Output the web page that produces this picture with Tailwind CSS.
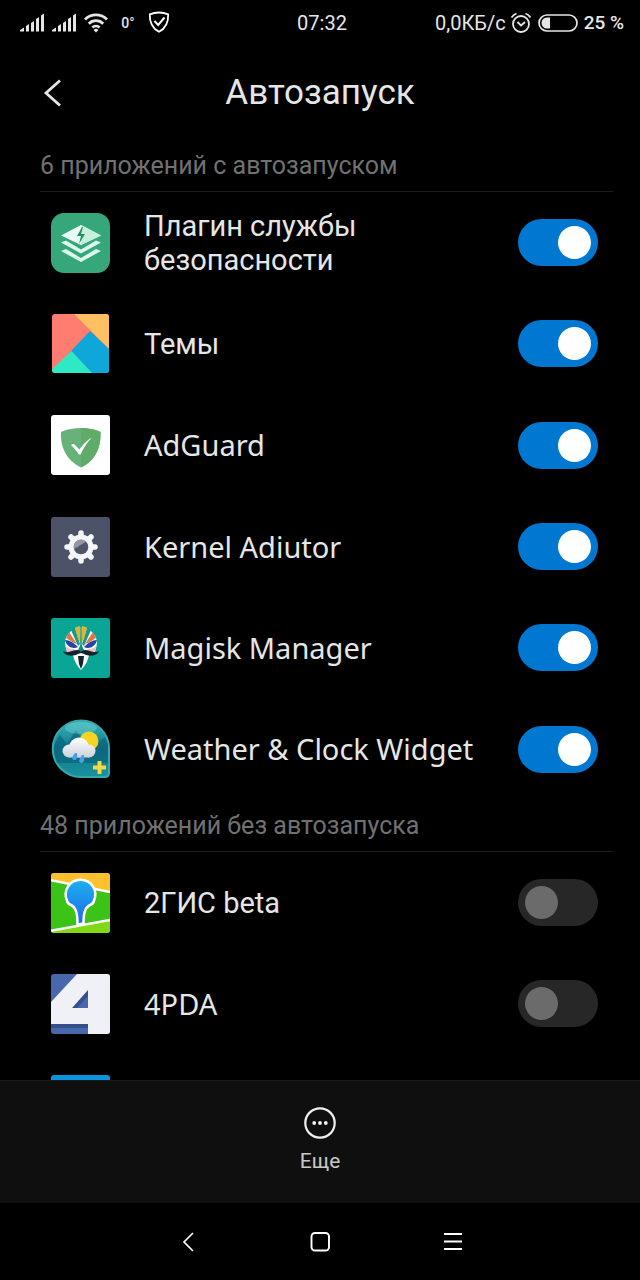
<!DOCTYPE html>
<html lang="ru">
<head>
    <meta charset="UTF-8">
    <meta name="viewport" content="width=device-width, initial-scale=1.0">
    <title>Автозапуск</title>
    <script src="https://cdn.jsdelivr.net/npm/@tailwindcss/browser@4"></script>
</head>
<body class="bg-black text-[#e6e6e6] font-['Roboto',sans-serif]">
<div class="flex flex-col h-screen">

    <!-- Status bar -->
    <div class="grid grid-cols-3 items-center h-[46px] pl-5 pr-4 text-xl shrink-0">
        <div class="flex items-center gap-2">
            <svg class="w-6 h-5" viewBox="0 0 24 20" fill="#e6e6e6"><path d="M0 17 4 14.500v4H0zM6 13l3-2v7.500H6zM11 10l3-2v10.500h-3zM16 6l3-2v14.500h-3zM21 2.500 24 .5v18h-3z"/></svg>
            <svg class="w-6 h-5" viewBox="0 0 24 20" fill="#e6e6e6"><path d="M0 17 4 14.500v4H0zM6 13l3-2v7.500H6zM11 10l3-2v10.500h-3zM16 6l3-2v14.500h-3zM21 2.500 24 .5v18h-3z"/></svg>
            <svg class="w-6 h-5" viewBox="0 0 24 20" fill="none" stroke="#e6e6e6" stroke-width="2.800"><path d="M1 6.500a15.500 15.500 0 0 1 22 0M4.800 10.700a10 10 0 0 1 14.400 0M8.400 14.500a5.200 5.200 0 0 1 7.200 0"/><path d="M12 19.500 9.500 17a3.600 3.600 0 0 1 5 0z" fill="#e6e6e6" stroke="none"/></svg>
            <span class="w-6 text-center text-sm font-medium">0°</span>
            <svg class="w-6 h-6" viewBox="0 0 24 24" fill="none" stroke="#fff" stroke-width="1.800"><path d="M11 1.500c3 0 6 .5 9.200 1.800C20.500 11 18.500 17 11 20.800 3.500 17 1.500 11 1.800 3.300 5 2 8 1.500 11 1.500z"/><path d="m6.500 10 3.700 4 6.300-7.500" stroke-width="2"/></svg>
        </div>
        <div class="text-center">07:32</div>
        <div class="flex items-center justify-end gap-1 whitespace-nowrap">
            <span>0,0КБ/с</span>
            <svg class="w-[22px] h-[22px] shrink-0" viewBox="0 0 22 22" fill="none" stroke="#e6e6e6" stroke-width="1.800"><circle cx="11" cy="12" r="8"/><path d="M1.500 5.500a10 10 0 0 1 5-4M20.500 5.500a10 10 0 0 0-5-4M7.500 10l3.500 3.500L15 10"/></svg>
            <svg class="w-11 h-5 shrink-0" viewBox="0 0 44 20" fill="none"><rect x="3" y="2" width="38" height="16" rx="8" stroke="#e6e6e6" stroke-width="1.700"/><path d="M14 4.500v11h-3a5.500 5.500 0 0 1 0-11z" fill="#e6e6e6"/></svg>
            <span class="text-[19px] font-medium">25 %</span>
        </div>
    </div>

    <!-- Header -->
    <header class="grid grid-cols-[1fr_auto_1fr] items-center h-[94px] px-10 shrink-0">
        <button type="button" aria-label="Назад" class="w-6 h-8">
            <svg class="w-6 h-8" viewBox="0 0 24 32" fill="none" stroke="#e6e6e6" stroke-width="2.800"><path d="M20 3.500 6 16l14 12.500"/></svg>
        </button>
        <h1 class="text-[35px] leading-10">Автозапуск</h1>
    </header>

    <main class="flex-1 min-h-0 overflow-hidden">
        <section>
            <h2 class="flex items-center h-[52px] ml-10 mr-[27px] border-b border-[#1c1c1c] text-[25px] text-[#717171]">6 приложений с автозапуском</h2>
            <ul class="grid grid-rows-6 h-[608px] text-[29px] leading-[34px]">
                <li class="flex items-center pl-[50px] pr-[42px]">
                    <svg class="w-[60px] h-[60px] shrink-0" viewBox="0 0 60 60">
                        <rect x="1" width="59" height="60" rx="13" fill="#36a67b"/>
                        <path d="m11 38 5-2 15 9 15-9 5 2-20 11z" fill="#dcfaec"/>
                        <path d="m11 29.500 5-2 15 9 15-9 5 2-20 11z" fill="#dcfaec"/>
                        <path d="m31 12 20 10.500-20 9.500-20-9.500z" fill="#e9fff5"/>
                        <path d="M31 12v20l20-9.500z" fill="#c4f0dc"/>
                        <path d="m32 14-5 9h4l-2 8 6-10h-4l2-7z" fill="#268c64"/>
                    </svg>
                    <label for="plugin" class="flex-1 ml-[34px]">Плагин службы<br>безопасности</label>
                    <input id="plugin" type="checkbox" checked class="appearance-none flex items-center w-20 h-[47px] px-[7px] rounded-full bg-[#272727] checked:bg-[#0078d2] checked:justify-end before:block before:w-[33px] before:h-[33px] before:rounded-full before:bg-[#6b6b6b] checked:before:bg-white">
                </li>
                <li class="flex items-center pl-[50px] pr-[42px]">
                    <svg class="w-[60px] h-[60px] shrink-0" viewBox="0 0 60 60">
                        <clipPath id="themes"><rect x="2" width="57" height="59" rx="3"/></clipPath>
                        <g clip-path="url(#themes)">
                            <path d="M0 0h60v60H0z" fill="#ff7c70"/>
                            <path d="M24 0h36v36z" fill="#ffc061"/>
                            <path d="M40 17 60 36v24H42L21 37z" fill="#0fa7d9"/>
                            <path d="M0 57v3h43L21.500 37z" fill="#2deac4"/>
                        </g>
                    </svg>
                    <label for="themesApp" class="flex-1 ml-[34px]">Темы</label>
                    <input id="themesApp" type="checkbox" checked class="appearance-none flex items-center w-20 h-[47px] px-[7px] rounded-full bg-[#272727] checked:bg-[#0078d2] checked:justify-end before:block before:w-[33px] before:h-[33px] before:rounded-full before:bg-[#6b6b6b] checked:before:bg-white">
                </li>
                <li class="flex items-center pl-[50px] pr-[42px]">
                    <svg class="w-[60px] h-[60px] shrink-0" viewBox="0 0 60 60">
                        <rect x="1" width="59" height="60" rx="3" fill="#fff"/>
                        <path d="M31 13c7 0 13 1 19.500 4C51 32 46 45 31 52.500 16 45 10 32 11 17c6.500-3 13-4 20-4z" fill="#67b279"/>
                        <path d="M31 13c7 0 13 1 19.500 4C51 32 46 45 31 52.500z" fill="#5fac6a"/>
                        <path d="M21 30c2-1.500 3-1.500 4 0l4.500 4.500C33 29 37 25 42 22.500c-5 5-8 10-11.500 17h-1.500C26.500 36 24 33 21 30z" fill="#fff"/>
                    </svg>
                    <label for="adguard" class="flex-1 ml-[34px] font-['Noto_Sans',sans-serif]">AdGuard</label>
                    <input id="adguard" type="checkbox" checked class="appearance-none flex items-center w-20 h-[47px] px-[7px] rounded-full bg-[#272727] checked:bg-[#0078d2] checked:justify-end before:block before:w-[33px] before:h-[33px] before:rounded-full before:bg-[#6b6b6b] checked:before:bg-white">
                </li>
                <li class="flex items-center pl-[50px] pr-[42px]">
                    <svg class="w-[60px] h-[60px] shrink-0" viewBox="0 0 60 60">
                        <rect x="1" width="59" height="60" rx="3" fill="#4c5267"/>
                        <g stroke="#f5f6f8" stroke-width="5.500" stroke-linecap="round">
                            <path d="M31 16v28M17 30h28M21 20l20 20M41 20 21 40"/>
                        </g>
                        <circle cx="31" cy="30" r="12.500" fill="#f5f6f8"/>
                        <circle cx="31" cy="30" r="7.300" fill="#50566a"/>
                        <path d="M24 32a7.300 7.300 0 0 1 12-7.300z" fill="#9397a4"/>
                    </svg>
                    <label for="kernel" class="flex-1 ml-[34px] font-['Noto_Sans',sans-serif]">Kernel Adiutor</label>
                    <input id="kernel" type="checkbox" checked class="appearance-none flex items-center w-20 h-[47px] px-[7px] rounded-full bg-[#272727] checked:bg-[#0078d2] checked:justify-end before:block before:w-[33px] before:h-[33px] before:rounded-full before:bg-[#6b6b6b] checked:before:bg-white">
                </li>
                <li class="flex items-center pl-[50px] pr-[42px]">
                    <svg class="w-[60px] h-[60px] shrink-0" viewBox="0 0 60 60">
                        <rect x="1" width="59" height="60" rx="3" fill="#0aa695"/>
                        <path d="M15 25c0-7 5-14 16-16 11 2 16 9 16 16-1 4-1 8-3 10l-5 2c-1 6-4 11-8 15-4-4-7-9-8-15l-5-2c-2-2-2-6-3-10z" fill="#fff"/>
                        <path d="m21 12 7 16 2-2-5-16zM41 12l-7 16-2-2 5-16z" fill="#159b8b"/>
                        <path d="M25 9.500 30 8l1 18-3-5zM37 9.500 32 8l-1 18 3-5z" fill="#dfb633"/>
                        <path d="M31 8v20" stroke="#159b8b" stroke-width="1.500"/>
                        <path d="m19 14 8 12-3-1-8-5zM43 14l-8 12 3-1 8-5z" fill="#dc7746"/>
                        <path d="M15 22c5 0 9 3 13 7-4 2-11 1-13-7zM47 22c-5 0-9 3-13 7 4 2 11 1 13-7z" fill="#2446a0"/>
                        <path d="M15 27c3 4 6 4 10 4l-3 4-5-2zM47 27c-3 4-6 4-10 4l3 4 5-2z" fill="#f2bdc5"/>
                        <path d="m31 26-4 8h8z" fill="#12877a"/>
                        <path d="M13 33c4 3 10-1 14-1 2 0 3 1 4 2 1-1 2-2 4-2 4 0 10 4 14 1-1 5-10 6-15 3l-3-1-3 1c-5 3-14 2-15-3zM28 38h6l-1 8-2 5-2-5z" fill="#10262c"/>
                    </svg>
                    <label for="magisk" class="flex-1 ml-[34px] font-['Noto_Sans',sans-serif]">Magisk Manager</label>
                    <input id="magisk" type="checkbox" checked class="appearance-none flex items-center w-20 h-[47px] px-[7px] rounded-full bg-[#272727] checked:bg-[#0078d2] checked:justify-end before:block before:w-[33px] before:h-[33px] before:rounded-full before:bg-[#6b6b6b] checked:before:bg-white">
                </li>
                <li class="flex items-center pl-[50px] pr-[42px]">
                    <svg class="w-[60px] h-[60px] shrink-0" viewBox="0 0 60 60">
                        <defs>
                            <linearGradient id="sky" x2="0" y2="1"><stop stop-color="#35b5b9"/><stop offset=".5" stop-color="#14768b"/><stop offset="1" stop-color="#17939f"/></linearGradient>
                            <linearGradient id="cloud" gradientUnits="userSpaceOnUse" x1="0" y1="18" x2="0" y2="39"><stop stop-color="#fff"/><stop offset="1" stop-color="#ccd2da"/></linearGradient>
                        </defs>
                        <path d="M31 1.500a28 28 0 0 1 28 28V54q0 4-4 4H31a28 28 0 0 1 0-56.500z" fill="url(#sky)" stroke="#37a7ab" stroke-width="2"/>
                        <path d="m5 24 5-8 7 9 9-14 10 14 10-9 4 6 5-4 3 7v19H7q-4-10-2-20z" fill="#086179" opacity=".65"/>
                        <ellipse cx="31" cy="9" rx="16" ry="6" fill="#7cd9d8" opacity=".4"/>
                        <circle cx="39" cy="22" r="9.500" fill="#f6d321"/>
                        <g fill="url(#cloud)">
                            <circle cx="19" cy="32" r="6.500"/>
                            <circle cx="29" cy="28.500" r="10"/>
                            <circle cx="39" cy="32" r="6.500"/>
                            <path d="M19 30h20v8.500H19z"/>
                        </g>
                        <path d="M25 34q-5 6-1 7t3-7zM32 36q-5 7-1 8t3-8z" fill="#4d9fe3"/>
                        <path d="M47.500 42h4v4.500H56v4h-4.500V55h-4v-4.500H43v-4h4.500z" fill="#f4d942"/>
                    </svg>
                    <label for="weather" class="flex-1 ml-[34px] font-['Noto_Sans',sans-serif]">Weather &amp; Clock Widget</label>
                    <input id="weather" type="checkbox" checked class="appearance-none flex items-center w-20 h-[47px] px-[7px] rounded-full bg-[#272727] checked:bg-[#0078d2] checked:justify-end before:block before:w-[33px] before:h-[33px] before:rounded-full before:bg-[#6b6b6b] checked:before:bg-white">
                </li>
            </ul>
        </section>

        <section>
            <h2 class="flex items-center h-[52px] ml-10 mr-[27px] border-b border-[#1c1c1c] text-[25px] text-[#717171]">48 приложений без автозапуска</h2>
            <ul class="text-[29px] leading-[34px]">
                <li class="flex items-center h-[101px] pl-[50px] pr-[42px]">
                    <svg class="w-[60px] h-[60px] shrink-0" viewBox="0 0 60 60">
                        <defs>
                            <clipPath id="tile"><rect x="1" width="59" height="60" rx="3"/></clipPath>
                            <linearGradient id="pin" x2="0" y2="1"><stop stop-color="#1cb2ec"/><stop offset="1" stop-color="#2067ea"/></linearGradient>
                        </defs>
                        <g clip-path="url(#tile)">
                            <path d="M0 0h60v60H0z" fill="#3cc318"/>
                            <path d="M0 0h60v19L0 7z" fill="#ffc02e"/>
                            <path d="M0 58l60-12v14H0z" fill="#80d816"/>
                            <path d="m0 7 60 12M0 58l60-11" stroke="#fff" stroke-width="2.500"/>
                            <path d="M27.500 51.500C27.500 40 26 34 20 31.500a5 5 0 0 1-3-4 14.800 14.800 0 1 1 27 0 5 5 0 0 1-3 4c-6 2.500-7.500 8.500-7.500 19z" fill="url(#pin)" stroke="#fff" stroke-width="2.500"/>
                        </g>
                    </svg>
                    <label for="gis" class="flex-1 ml-[34px]">2ГИС beta</label>
                    <input id="gis" type="checkbox" class="appearance-none flex items-center w-20 h-[47px] px-[7px] rounded-full bg-[#272727] checked:bg-[#0078d2] checked:justify-end before:block before:w-[33px] before:h-[33px] before:rounded-full before:bg-[#6b6b6b] checked:before:bg-white">
                </li>
                <li class="flex items-center h-[101px] pl-[50px] pr-[42px]">
                    <svg class="w-[60px] h-[60px] shrink-0" viewBox="0 0 60 60">
                        <g clip-path="url(#tile)">
                            <path d="M0 0h60v60H0z" fill="#4967ad"/>
                            <path d="M0 50h38v4H0zM22 34h16V16z" fill="#354f8c"/>
                            <path d="M27 34h11V22z" fill="#4967ad"/>
                            <path fill-rule="evenodd" d="M27 0h33v60H38V50H0V29zM22 34h16V16z" fill="#eff1f7"/>
                        </g>
                    </svg>
                    <label for="pda" class="flex-1 ml-[34px] font-['Noto_Sans',sans-serif]">4PDA</label>
                    <input id="pda" type="checkbox" class="appearance-none flex items-center w-20 h-[47px] px-[7px] rounded-full bg-[#272727] checked:bg-[#0078d2] checked:justify-end before:block before:w-[33px] before:h-[33px] before:rounded-full before:bg-[#6b6b6b] checked:before:bg-white">
                </li>
                <li class="flex items-center h-[101px] pl-[50px] pr-[42px]">
                    <svg class="w-[60px] h-[60px] shrink-0" viewBox="0 0 60 60"><rect x="1" width="59" height="60" rx="3" fill="#0a95dd"/></svg>
                </li>
            </ul>
        </section>
    </main>

    <!-- Bottom action -->
    <footer class="flex justify-center h-[123px] pt-[26px] bg-[#0f0f0f] border-t border-[#1a1a1a] shrink-0">
        <button type="button" class="flex flex-col items-center gap-1.5 h-[66px] text-[21px] leading-8 text-[#c8c8c8]">
            <svg class="w-8 h-8 shrink-0" viewBox="0 0 32 32" fill="none"><circle cx="16" cy="16" r="14.700" stroke="#f0f0f0" stroke-width="2.200"/><path d="M8.300 16a1.900 1.900 0 1 0 3.800 0 1.900 1.900 0 1 0-3.800 0zM14.100 16a1.900 1.900 0 1 0 3.800 0 1.900 1.900 0 1 0-3.800 0zM19.900 16a1.900 1.900 0 1 0 3.800 0 1.900 1.900 0 1 0-3.800 0z" fill="#f0f0f0"/></svg>
            Еще
        </button>
    </footer>

    <!-- System navigation -->
    <nav class="flex items-center justify-center gap-[109px] h-[77px] shrink-0">
        <button type="button" aria-label="Назад"><svg class="w-6 h-6" viewBox="0 0 24 24" fill="none" stroke="#fff" stroke-width="1.700"><path d="M18 3 9 12l9 9"/></svg></button>
        <button type="button" aria-label="Домой"><svg class="w-6 h-6" viewBox="0 0 24 24" fill="none" stroke="#fff" stroke-width="1.900"><rect x="3.500" y="3" width="17.500" height="17.500" rx="3.500"/></svg></button>
        <button type="button" aria-label="Меню"><svg class="w-6 h-6" viewBox="0 0 24 24" fill="none" stroke="#fff" stroke-width="1.900"><path d="M3 4h18M3 11.500h18M3 19h18"/></svg></button>
    </nav>
</div>
</body>
</html>
